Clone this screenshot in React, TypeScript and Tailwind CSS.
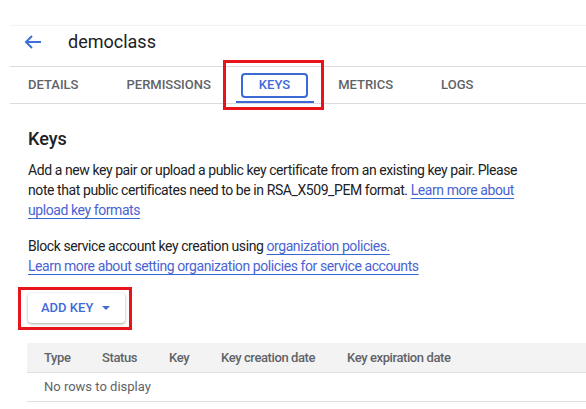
import React from 'react';

const tabs = ['DETAILS', 'PERMISSIONS', 'KEYS', 'METRICS', 'LOGS'];
const columns = ['Type', 'Status', 'Key', 'Key creation date', 'Key expiration date'];

const BackArrow: React.FC = () => (
  <svg width="17" height="14" viewBox="0 0 17 14" fill="none" className="block">
    <path d="M2 7H17" stroke="#3f6fd8" strokeWidth="2" />
    <path d="M8 1L2 7L8 13" stroke="#3f6fd8" strokeWidth="2" />
  </svg>
);

const linkCls = 'text-[#4a63d4] underline decoration-[#3b6ad6] underline-offset-[3px]';

const App: React.FC = () => {
  return (
    <div
      className="w-[586px] h-[409px] bg-white overflow-hidden text-[#202124]"
      style={{ fontFamily: 'Roboto, "Liberation Sans", sans-serif' }}
    >
      <div className="pl-[10px]">
        {/* title bar */}
        <div className="mt-[25px] h-[42px] border-t border-b border-t-[#f2f2f2] border-b-[#dadce0] flex items-start pt-[8px]">
          <div className="ml-[14px] mt-[1px]">
            <BackArrow />
          </div>
          <h1 className="ml-[27px] -mt-[4px] text-[18px] leading-[24px] text-[#202124]">democlass</h1>
        </div>

        {/* tabs */}
        <div className="h-[37px] border-b border-[#dadce0] flex items-center gap-12 pl-[18px]">
          {tabs.map((t) => (
            <span
              key={t}
              className={`relative text-[13px] leading-[16px] font-medium ${
                t === 'KEYS' ? 'text-[#4168d8]' : 'text-[#5f6368]'
              }`}
            >
              {t}
              {t === 'KEYS' && (
                <>
                  <span className="absolute -left-[18px] -right-[18px] -top-[4px] -bottom-[5px] border-2 border-[#3b6ad6] rounded-[4px]" />
                  <span className="absolute -left-[23px] -right-[24px] top-[24px] h-[2px] bg-[#3b6ad6]" />
                  <span className="absolute -left-[36px] -right-[34px] -top-[17px] -bottom-[17px] border-[3px] border-[#e8141c]" />
                </>
              )}
            </span>
          ))}
        </div>
      </div>

      <div className="pl-[28px]">
        <h2 className="mt-[23px] text-[18px] leading-[24px] font-medium text-[#202124]">Keys</h2>

        <p className="mt-[9px] text-[14px] leading-[20px] tracking-[-0.42px] text-[#202124] whitespace-nowrap">
          Add a new key pair or upload a public key certificate from an existing key pair. Please
          <br />
          note that public certificates need to be in RSA_X509_PEM format.{' '}
          <a className={linkCls}>Learn more about</a>
          <br />
          <a className={linkCls}>upload key formats</a>
        </p>

        <p className="mt-[16px] text-[14px] leading-[20px] tracking-[-0.42px] text-[#202124] whitespace-nowrap">
          Block service account key creation using <a className={linkCls}>organization policies.</a>
          <br />
          <a className={linkCls}>Learn more about setting organization policies for service accounts</a>
        </p>

        {/* add key button */}
        <div className="relative mt-[17px] w-[97px] h-[30px]">
          <button className="w-full h-full bg-white rounded-[4px] shadow-[0_1px_2px_rgba(60,64,67,0.3),0_1px_3px_1px_rgba(60,64,67,0.12)] flex items-center pl-[13px] text-[13px] font-medium text-[#3f6ad8]">
            ADD KEY
            <svg width="8" height="4" viewBox="0 0 8 4" className="ml-[9px]">
              <path d="M0 0H8L4 4Z" fill="#3f6ad8" />
            </svg>
          </button>
          <span className="absolute -left-[10px] -right-[7px] -top-[6px] -bottom-[7px] border-[3px] border-[#e8141c]" />
        </div>

        {/* table */}
        <div className="mt-[20px] -ml-px">
          <div className="h-[30px] bg-[#f3f3f3] border-b border-[#e0e0e0] grid grid-cols-[58px_67px_52px_126px_1fr] items-center pl-[17px] text-[13px] font-medium tracking-[-0.4px] text-[#5f6368]">
            {columns.map((c) => (
              <span key={c}>{c}</span>
            ))}
          </div>
          <div className="h-[29px] border-b border-[#e0e0e0] flex items-center pl-[17px] text-[13px] text-[#5f6368]">
            No rows to display
          </div>
        </div>
      </div>
    </div>
  );
};

export default App;
